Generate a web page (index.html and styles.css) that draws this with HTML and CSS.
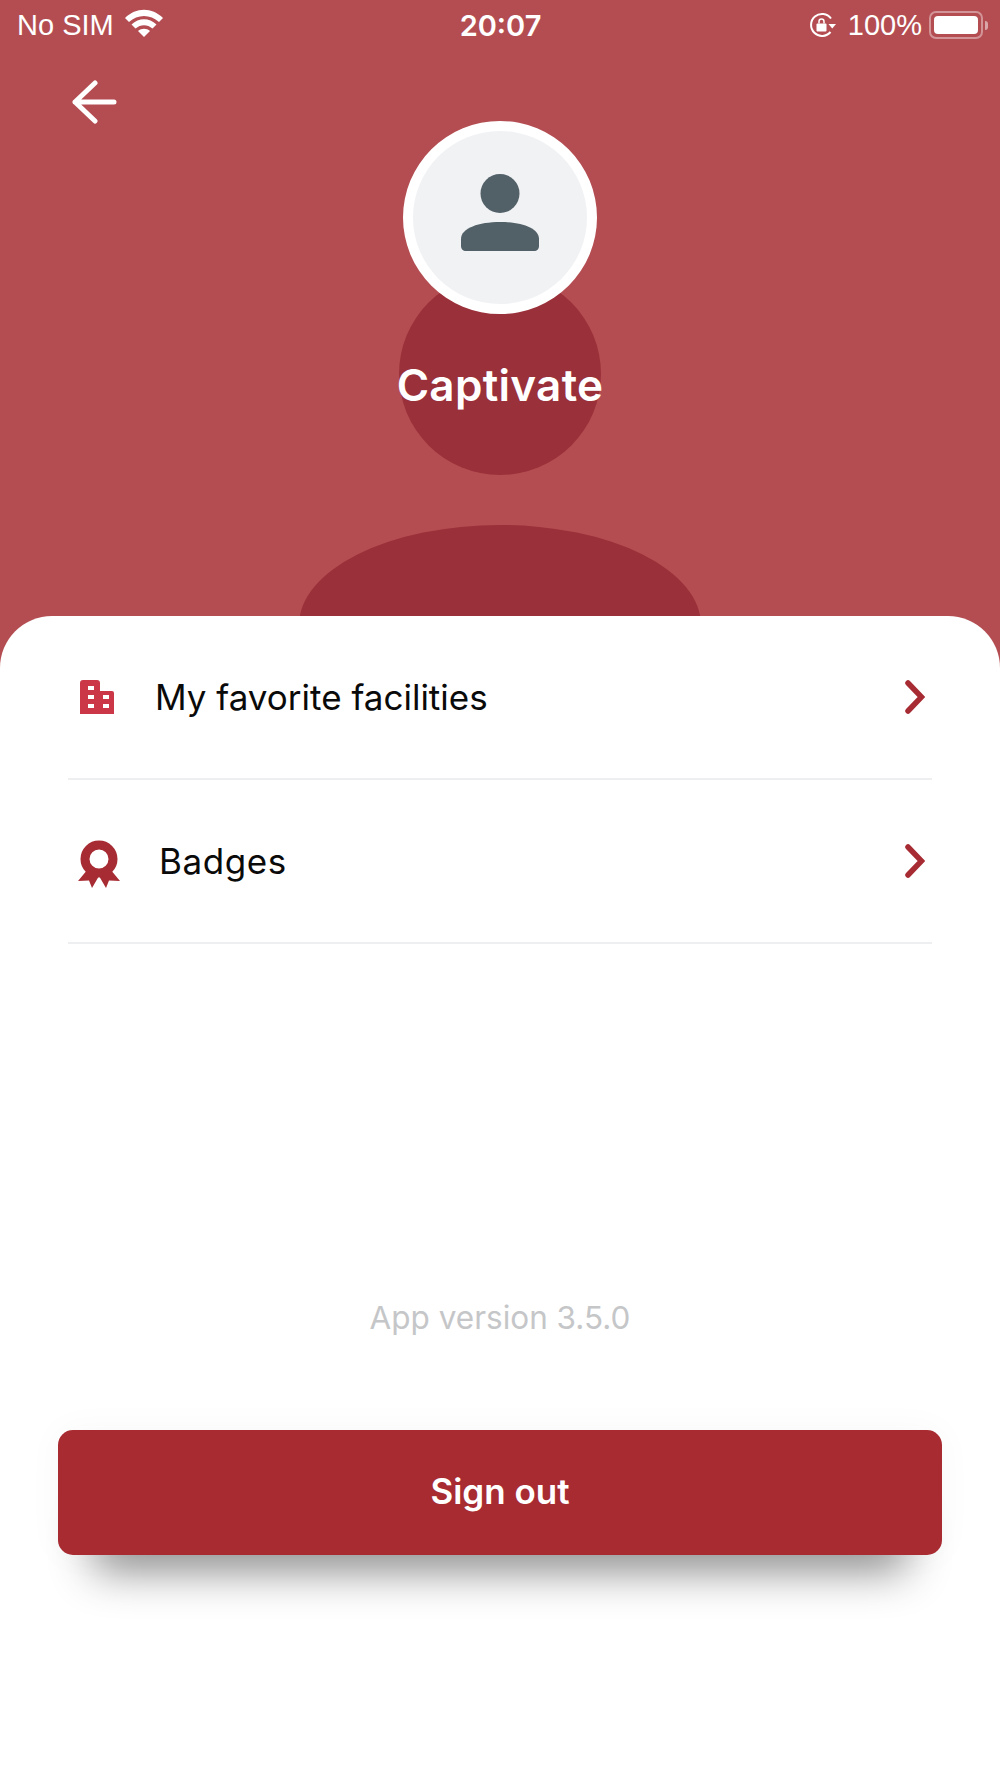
FILE: index.html
```html
<!DOCTYPE html>
<html lang="en">
<head>
<meta charset="utf-8">
<title>Profile</title>
<link rel="stylesheet" href="styles.css">
</head>
<body>
<div class="screen">
  <header class="hero">
    <div class="silhouette-head"></div>
    <div class="silhouette-body"></div>
    <div class="status">
      <div class="status-left">
        <span>No SIM</span>
        <svg class="wifi" width="38" height="28" viewBox="0 0 38 28"><path d="M0 9C11 -2 27 -2 38 9L34 13C25.500 5 12.500 5 4 13Z" fill="#fff"/><path d="M6.500 15.500C14 8.500 24 8.500 31.500 15.500L27.500 19.500C22.500 15 15.500 15 10.500 19.500Z" fill="#fff"/><path d="M13 22C16.500 19 21.500 19 25 22L19 28Z" fill="#fff"/></svg>
      </div>
      <div class="status-time">20:07</div>
      <div class="status-right">
        <svg class="lock" width="28" height="26" viewBox="0 0 28 26"><path d="M21.500 20A11 11 0 1 1 22 6.500" fill="none" stroke="#fff" stroke-width="2"/><path d="M19.500 12h7.500l-3.750 4.500Z" fill="#fff"/><rect x="7.500" y="11.500" width="10" height="8" rx="1" fill="#fff"/><path d="M10 11.500V9.500a2.500 2.500 0 0 1 5 0v2" fill="none" stroke="#fff" stroke-width="1.500"/></svg>
        <span>100%</span>
        <div class="battery"><div class="battery-fill"></div></div>
        <div class="battery-tip"></div>
      </div>
    </div>
    <div class="back-row">
      <svg class="back" width="46" height="44" viewBox="0 0 46 44"><path d="M24 3 L4 22 L24 41 M4 22 H43" fill="none" stroke="#fff" stroke-width="5" stroke-linecap="round" stroke-linejoin="round"/></svg>
    </div>
    <div class="avatar">
      <svg width="78" height="78" viewBox="0 0 78 78"><circle cx="39" cy="19.500" r="19.500" fill="#526068"/><path d="M0 65C0 54 18 48 39 48C60 48 78 54 78 65V72C78 75 76 77 73 77H5C2 77 0 75 0 72Z" fill="#526068"/></svg>
    </div>
    <h1 class="name">Captivate</h1>
  </header>

  <main class="sheet">
    <ul class="menu">
      <li class="menu-row">
        <svg class="row-icon" width="34" height="34" viewBox="0 0 34 34"><path d="M0 3a3 3 0 0 1 3-3h14a3 3 0 0 1 3 3v8h12a2 2 0 0 1 2 2v21H0Z" fill="#cc3747"/><g fill="#fff"><rect x="8" y="6" width="6" height="4"/><rect x="8" y="15" width="6" height="4"/><rect x="8" y="24" width="6" height="4"/><rect x="23" y="15" width="6" height="4"/><rect x="23" y="24" width="6" height="4"/></g></svg>
        <span class="row-label">My favorite facilities</span>
        <svg class="chevron" width="20" height="34" viewBox="0 0 20 34"><path d="M3 3L16.500 17L3 31" fill="none" stroke="#a72b32" stroke-width="5.500" stroke-linecap="round" stroke-linejoin="miter"/></svg>
      </li>
      <li class="menu-row">
        <svg class="row-icon badge" width="42" height="48" viewBox="0 0 42 48"><path d="M10 29L0 41L11 40.500L14 48L21 36L28 48L31 40.500L42 41L32 29Z" fill="#a72b32"/><circle cx="21" cy="19" r="14" fill="none" stroke="#a72b32" stroke-width="9"/></svg>
        <span class="row-label">Badges</span>
        <svg class="chevron" width="20" height="34" viewBox="0 0 20 34"><path d="M3 3L16.500 17L3 31" fill="none" stroke="#a72b32" stroke-width="5.500" stroke-linecap="round" stroke-linejoin="miter"/></svg>
      </li>
    </ul>
    <p class="version">App version 3.5.0</p>
    <button class="signout" type="button">Sign out</button>
  </main>
</div>
</body>
</html>
```
FILE: styles.css
```css
* { box-sizing: border-box; }
html, body { margin: 0; padding: 0; }
body { font-family: "Inter", "Lato", sans-serif; background: #fff; }
.screen { width: 1000px; height: 1778px; display: flex; flex-direction: column; background: #b44d52; overflow: hidden; }

.hero { position: relative; height: 616px; flex: none; display: flex; flex-direction: column; align-items: center; color: #fff; }
.silhouette-head { position: absolute; left: 399px; top: 273px; width: 202px; height: 202px; border-radius: 50%; background: #9a3039; }
.silhouette-body { position: absolute; left: 299px; top: 525px; width: 402px; height: 200px; border-radius: 50%; background: #9a3039; }

.status { position: relative; width: 100%; height: 50px; padding: 0 12px 0 17px; display: flex; align-items: center; justify-content: space-between; font-family: "Liberation Sans", sans-serif; font-size: 29px; }
.status-left { display: flex; align-items: center; gap: 11px; width: 240px; }
.wifi { margin-top: -5px; }
.status-time { font-family: "Inter", sans-serif; font-weight: 600; font-size: 29px; margin-left: -4px; }
.status-right { display: flex; align-items: center; justify-content: flex-end; width: 240px; }
.lock { margin-right: 11px; }
.battery { width: 54px; height: 28px; margin-left: 7px; padding: 3px; border: 2px solid rgba(255,255,255,.4); border-radius: 7px; }
.battery-fill { width: 100%; height: 100%; background: #fff; border-radius: 4px; }
.battery-tip { width: 3px; height: 9px; margin-left: 2px; background: rgba(255,255,255,.5); border-radius: 0 3px 3px 0; }

.back-row { position: relative; width: 100%; height: 71px; padding: 30px 0 0 71px; }
.back { display: block; }

.avatar { position: relative; width: 194px; height: 193px; border-radius: 50%; border: 10px solid #fff; background: #f1f2f4; display: flex; align-items: center; justify-content: center; padding-bottom: 10px; }
.name { position: relative; margin: 41px 0 0; font-size: 44px; line-height: 60px; font-weight: 600; letter-spacing: .3px; }

.sheet { position: relative; flex: 1; background: #fff; border-radius: 52px 52px 0 0; padding: 0 58px; display: flex; flex-direction: column; }
.menu { list-style: none; margin: 0; padding: 0 10px; }
.menu-row { height: 164px; display: flex; align-items: center; border-bottom: 2px solid #eeeff1; }
.row-icon { flex: none; margin-left: 12px; }
.badge { margin-left: 10px; margin-top: 6px; }
.row-label { flex: 1; margin-left: 41px; font-size: 35px; color: #0a0a0a; }
.badge + .row-label { margin-left: 39px; letter-spacing: .6px; }
.chevron { flex: none; margin-right: 7px; }

.version { margin: 354px 0 0; text-align: center; font-size: 31.500px; line-height: 40px; color: #c5c6c8; }
.signout { margin-top: 92px; height: 125px; width: 100%; border: 0; border-radius: 15px; background: #a82b32; color: #fff; font-family: inherit; font-size: 35px; font-weight: 600; padding: 0 0 3px; box-shadow: 0 52px 44px -36px rgba(0,0,0,.45), 0 0 36px rgba(0,0,0,.035); }
```
